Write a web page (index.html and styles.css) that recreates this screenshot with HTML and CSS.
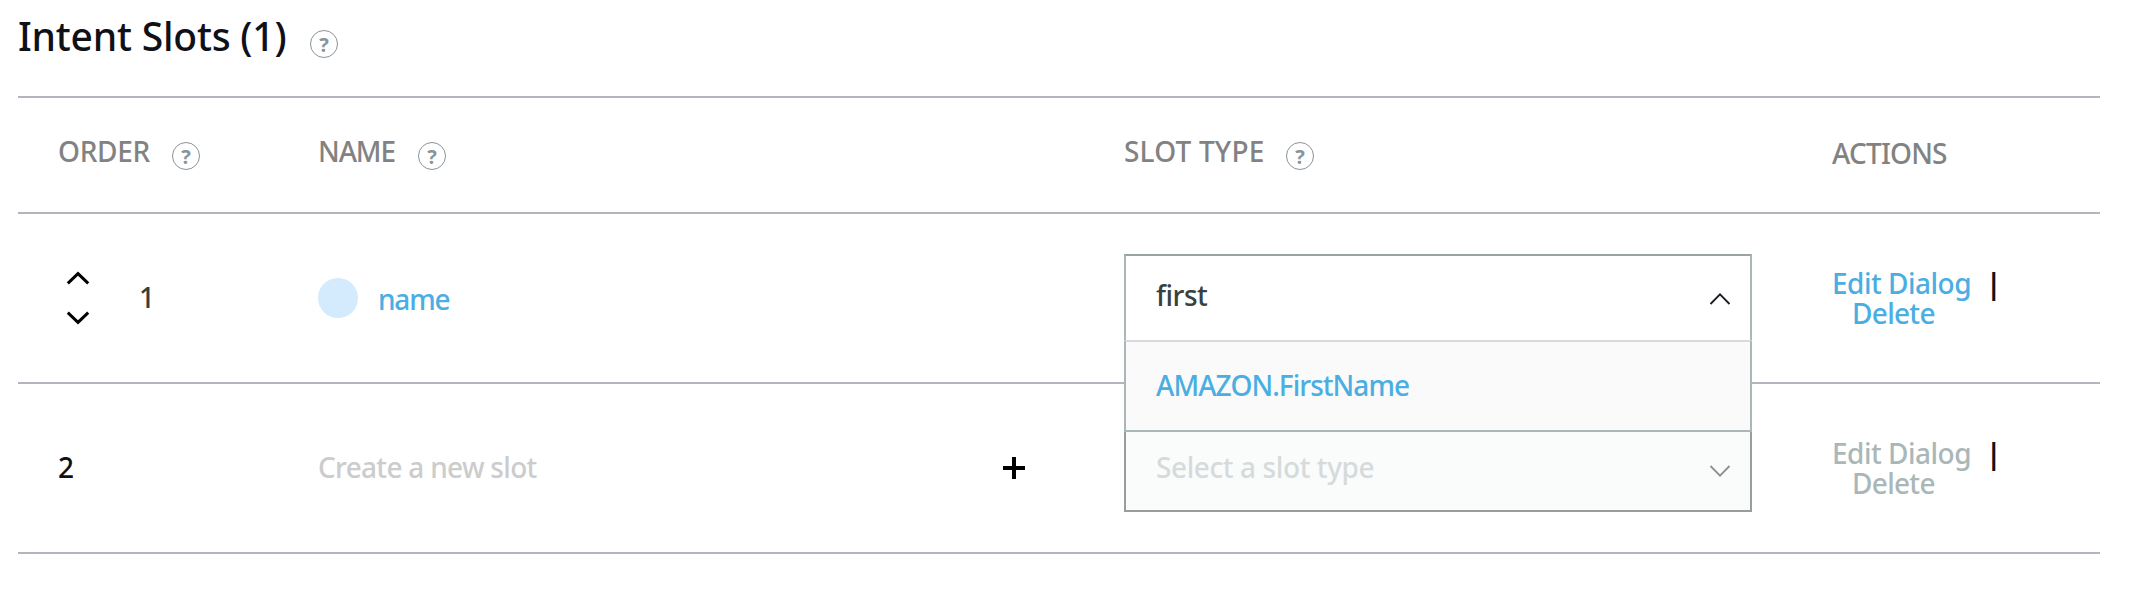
FILE: index.html
```html
<!DOCTYPE html>
<html lang="en">
<head>
<meta charset="utf-8">
<title>Intent Slots</title>
<link rel="stylesheet" href="styles.css">
</head>
<body>
<main class="slots">
  <header class="title-bar">
    <h1 class="title">Intent Slots (1)</h1>
    <span class="help">?</span>
  </header>

  <div class="row head">
    <div class="cell order"><span class="label label-order">ORDER</span><span class="help">?</span></div>
    <div class="cell name"><span class="label label-name">NAME</span><span class="help">?</span></div>
    <div class="cell type"><span class="label label-type">SLOT TYPE</span><span class="help">?</span></div>
    <div class="cell actions"><span class="label label-actions">ACTIONS</span></div>
  </div>

  <div class="row">
    <div class="cell order">
      <div class="sorter">
        <svg class="arrow" viewBox="0 0 24 14"><path d="M1.8 12.3 12 2.6 22.2 12.3"/></svg>
        <svg class="arrow" viewBox="0 0 24 14"><path d="M1.8 1.7 12 11.4 22.2 1.7"/></svg>
      </div>
      <span class="number">1</span>
    </div>
    <div class="cell name">
      <span class="swatch"></span>
      <a class="slot-name">name</a>
    </div>
    <div class="cell type">
      <div class="combo open">
        <span class="value">first</span>
        <svg class="chevron" viewBox="0 0 22 12"><path d="M1.5 11 11 1.4 20.5 11"/></svg>
        <div class="menu"><div class="option">AMAZON.FirstName</div></div>
      </div>
    </div>
    <div class="cell actions">
      <div class="action-line"><a class="edit">Edit Dialog</a><span class="bar">|</span></div>
      <a class="delete">Delete</a>
    </div>
  </div>

  <div class="row">
    <div class="cell order"><span class="number new">2</span></div>
    <div class="cell name">
      <span class="placeholder">Create a new slot</span>
      <svg class="plus" viewBox="0 0 22 22"><path d="M11 0V22M0 11H22"/></svg>
    </div>
    <div class="cell type">
      <div class="combo disabled">
        <span class="value">Select a slot type</span>
        <svg class="chevron" viewBox="0 0 22 12"><path d="M1.5 1 11 10.6 20.5 1"/></svg>
      </div>
    </div>
    <div class="cell actions off">
      <div class="action-line"><a class="edit">Edit Dialog</a><span class="bar">|</span></div>
      <a class="delete">Delete</a>
    </div>
  </div>
</main>
</body>
</html>
```
FILE: styles.css
```css
* { box-sizing: border-box; }

body {
  margin: 0;
  background: #fff;
  color: #0f1117;
  font: 500 28px/30px "Noto Sans", "Open Sans", sans-serif;
}

.slots { padding: 0 40px 0 18px; }

.title-bar {
  display: flex;
  height: 98px;
  border-bottom: 2px solid #b5b4bc;
}

.title {
  width: 292px;
  margin: 0;
  padding-top: 11px;
  font-size: 39px;
  font-weight: 500;
  line-height: 50px;
  letter-spacing: -0.2px;
  white-space: nowrap;
}

.help {
  display: block;
  flex: none;
  width: 28px;
  height: 28px;
  border: 1px solid #879596;
  border-radius: 50%;
  color: #87959a;
  font-size: 20px;
  font-weight: 700;
  line-height: 27px;
  text-align: center;
}

.title-bar .help { margin-top: 30px; }

.row {
  display: grid;
  grid-template-columns: 300px 806px 708px 1fr;
  height: 170px;
  border-bottom: 2px solid #b5b4bc;
}

.head { height: 116px; color: #828282; }

.cell { display: flex; align-items: flex-start; white-space: nowrap; }

.cell.order { padding-left: 40px; }

.head .cell { padding-top: 38px; }
.head .actions { padding-top: 40px; flex-direction: row; }
.head .help { margin-top: 6px; }

.label-order { width: 114px; letter-spacing: -0.3px; }
.label-name { width: 100px; letter-spacing: -1.1px; }
.label-type { width: 162px; letter-spacing: 0.2px; }
.label-actions { letter-spacing: -0.8px; }

.sorter {
  display: flex;
  flex-direction: column;
  gap: 26px;
  width: 81px;
  padding: 57px 0 0 8px;
}

.arrow { width: 24px; height: 14px; fill: none; stroke: #000; stroke-width: 3; }

.number { padding-top: 68px; color: #3c3c3c; }
.number.new { color: #0f1117; }

.swatch {
  width: 40px;
  height: 40px;
  margin: 64px 20px 0 0;
  border-radius: 50%;
  background: #d4eafd;
}

.slot-name { padding-top: 70px; color: #4aaee2; letter-spacing: -1.2px; }

.placeholder { width: 685px; padding-top: 68px; color: #cccccc; letter-spacing: -0.7px; }

.plus { width: 22px; height: 22px; margin-top: 73px; stroke: #000; stroke-width: 4; }

.type .combo { margin-top: 40px; }

.combo {
  position: relative;
  display: flex;
  justify-content: space-between;
  width: 628px;
  height: 88px;
  padding: 24px 19px 0 30px;
  border: 2px solid #aab7b8;
  border-top-color: #98a4a4;
  background: #fff;
}

.open { z-index: 1; color: #3a3f40; }
.open .value { letter-spacing: -0.5px; }

.chevron { width: 22px; height: 12px; margin-top: 13px; fill: none; stroke: #16191f; stroke-width: 1.8; }

.menu {
  position: absolute;
  top: 84px;
  left: -2px;
  width: 628px;
  height: 92px;
  padding: 28px 30px 0;
  border: 2px solid #aab7b8;
  border-top-color: #d5dbdb;
  background: #fafafa;
}

.option { color: #4aaee2; letter-spacing: -0.95px; }

.disabled { padding-top: 26px; border-color: #999c9c; background: #fafcfb; color: #d5dbdb; }
.disabled .value { letter-spacing: -0.4px; }
.disabled .chevron { stroke: #8c8e90; }

.actions { flex-direction: column; padding: 54px 0 0; color: #4aaee2; }
.head .actions { color: #828282; }
.off { color: #aab7b8; }
.action-line { display: flex; }
.edit { width: 154px; letter-spacing: -0.5px; }
.bar { color: #0f1117; font-weight: 700; }
.delete { padding-left: 20px; letter-spacing: -0.7px; }
```
